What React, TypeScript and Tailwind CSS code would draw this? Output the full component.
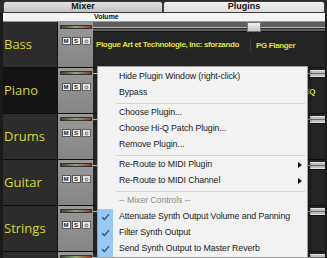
import React from "react";

const tracks = [
  { name: "Bass", plugin: "Plogue Art et Technologie, Inc: sforzando", second: "PG Flanger", selected: false, master: true, last: false },
  { name: "Piano", plugin: "", second: "PG Graphical EQ", selected: true, master: false, last: false },
  { name: "Drums", plugin: "", second: "", selected: false, master: false, last: false },
  { name: "Guitar", plugin: "", second: "", selected: false, master: false, last: false },
  { name: "Strings", plugin: "", second: "", selected: false, master: false, last: false },
  { name: "", plugin: "", second: "", selected: false, master: false, last: true },
];

function Check() {
  return (
    <svg width="9" height="8" viewBox="0 0 9 8" fill="none">
      <path d="M1 4.2 L3.4 6.5 L8 1.2" stroke="#1f5a9e" strokeWidth="1.4" />
    </svg>
  );
}

function Arrow() {
  return (
    <svg width="4" height="6" viewBox="0 0 4 6">
      <path d="M0 0 L4 3 L0 6 Z" fill="#111" />
    </svg>
  );
}

function TrackRow({ t }: { t: (typeof tracks)[number] }) {
  return (
    <div className="flex h-[46px] shrink-0 border-b border-[#0e0e0e]">
      <div
        className={`w-[55px] flex items-center pl-[1px] border-r border-[#111] text-[13px] leading-none text-[#d3d63c] ${
          t.selected ? "bg-[#141414]" : "bg-[#2c2c2c]"
        }`}
        style={{ fontFamily: "'Open Sans', sans-serif" }}
      >
        {t.name}
      </div>
      <div className="w-[35px] bg-gradient-to-b from-[#9a9a9a] to-[#858585] flex flex-col items-center pt-[3px]">
        <div className="w-[32px] h-[4px] border border-[#333] bg-gradient-to-r from-[#3c4734] via-[#8fa673] to-[#8a3526]" />
        {!t.last && (
          <div className="flex gap-[1px] mt-[8px] ml-[1px]">
            {["M", "S"].map((l) => (
              <div
                key={l}
                className="w-[9px] h-[8px] bg-[#efefef] border border-[#555] flex items-center justify-center text-[6px] font-bold leading-none text-[#222]"
                style={{ fontFamily: "'Liberation Sans', sans-serif" }}
              >
                {l}
              </div>
            ))}
            <div className="w-[9px] h-[8px] bg-[#e6e6e6] border border-[#666] flex items-center justify-center">
              <svg width="5" height="5" viewBox="0 0 5 5">
                <circle cx="2.5" cy="2.5" r="2" fill="#8a8a8a" />
                <circle cx="2.5" cy="2.5" r="0.8" fill="#e6e6e6" />
              </svg>
            </div>
          </div>
        )}
      </div>
      <div className="flex-1 flex flex-col">
        <div className={`h-[10px] relative border-b border-[#111] ${t.master ? "bg-[#5e5e5e]" : "bg-[#262626]"}`}>
          <div className="absolute left-0 right-0 top-[5px] h-[1px] bg-[#b8b8b8]" />
          <div className="absolute left-0 right-0 top-[6px] h-[1px] bg-[#2a2a2a]" />
          {t.master ? (
            <div className="absolute left-[154px] top-0 w-[14px] h-[10px] bg-gradient-to-b from-[#f0f0f0] to-[#c4c4c4] border border-[#777]" />
          ) : (
            <div className="absolute right-0 top-[2px] w-[15px] h-[7px] bg-[#bdbdbd] border-y border-[#e2e2e2] flex items-center">
              <div className="w-full h-[1px] bg-[#6a6a6a]" />
            </div>
          )}
        </div>
        <div
          className="flex-1 bg-[#242424] flex items-start pt-[10px] text-[8px] font-bold leading-none text-[#e0e23e] tracking-[-0.35px] overflow-hidden"
          style={{ fontFamily: "'Liberation Sans', sans-serif" }}
        >
          <div className="w-[158px] shrink-0 h-[14px] -mt-[4px] flex items-center pl-[3px] border-r border-[#3a3a3a] whitespace-nowrap overflow-hidden">
            {t.plugin}
          </div>
          <div className="pl-[5px] whitespace-nowrap">{t.second}</div>
        </div>
      </div>
    </div>
  );
}

const menu: Array<{ kind: "item" | "sep" | "label"; text?: string; check?: boolean; sub?: boolean }> = [
  { kind: "item", text: "Hide Plugin Window (right-click)" },
  { kind: "item", text: "Bypass" },
  { kind: "sep" },
  { kind: "item", text: "Choose Plugin..." },
  { kind: "item", text: "Choose Hi-Q Patch Plugin..." },
  { kind: "item", text: "Remove Plugin..." },
  { kind: "sep" },
  { kind: "item", text: "Re-Route to MIDI Plugin", sub: true },
  { kind: "item", text: "Re-Route to MIDI Channel", sub: true },
  { kind: "sep" },
  { kind: "label", text: "-- Mixer Controls --" },
  { kind: "item", text: "Attenuate Synth Output Volume and Panning", check: true },
  { kind: "item", text: "Filter Synth Output", check: true },
  { kind: "item", text: "Send Synth Output to Master Reverb", check: true },
];

export default function App() {
  return (
    <div className="w-[327px] h-[258px] relative overflow-hidden bg-[#1a1a1a]">
      {/* Tabs */}
      <div
        className="flex h-[13px] pl-[3px] pr-[2px] pt-[1px] bg-[#2a2a2a] text-[9px] font-bold text-[#111]"
        style={{ fontFamily: "'Liberation Sans', sans-serif" }}
      >
        <div className="w-[160px] flex items-center justify-center rounded-t-[3px] border border-[#3c3c3c] bg-gradient-to-b from-[#e2e2e2] to-[#c2c2c2]">
          Mixer
        </div>
        <div className="flex-1 flex items-center justify-center rounded-t-[3px] border border-[#3c3c3c] bg-gradient-to-b from-[#f4f4f4] to-[#dcdcdc]">
          Plugins
        </div>
      </div>

      {/* Column header */}
      <div
        className="h-[9px] ml-[3px] mr-[2px] bg-[#f3f3f3] border-b border-[#9a9a9a] flex items-center text-[7px] font-bold text-[#111]"
        style={{ fontFamily: "'Liberation Sans', sans-serif" }}
      >
        <span className="ml-[91px]">Volume</span>
      </div>

      {/* Track rows */}
      <div className="ml-[3px] mr-[2px] flex flex-col">
        {tracks.map((t, i) => (
          <TrackRow key={i} t={t} />
        ))}
      </div>

      {/* Context menu */}
      <div
        className="absolute left-[97px] top-[66px] w-[211px] bg-[#f2f2f2] border border-[#a0a0a0] shadow-[2px_2px_3px_rgba(0,0,0,0.35)] pt-[2px] text-[8.8px] tracking-[-0.1px] text-[#1a1a1a]"
        style={{ fontFamily: "'Liberation Sans', sans-serif" }}
      >
        {menu.map((m, i) =>
          m.kind === "sep" ? (
            <div key={i} className="h-[4px] flex items-center pl-[18px] pr-[2px]">
              <div className="w-full h-[1px] bg-[#d5d5d5]" />
            </div>
          ) : (
            <div key={i} className="h-[16px] flex items-center">
              <div className={`w-[15px] h-full flex items-center justify-center ${m.check ? "bg-[#99c9f3]" : ""}`}>
                {m.check && <Check />}
              </div>
              <span className={`ml-[6px] flex-1 whitespace-nowrap ${m.kind === "label" ? "text-[#8d8d8d]" : ""}`}>
                {m.text}
              </span>
              {m.sub && (
                <span className="mr-[5px] flex items-center">
                  <Arrow />
                </span>
              )}
            </div>
          )
        )}
      </div>
    </div>
  );
}
